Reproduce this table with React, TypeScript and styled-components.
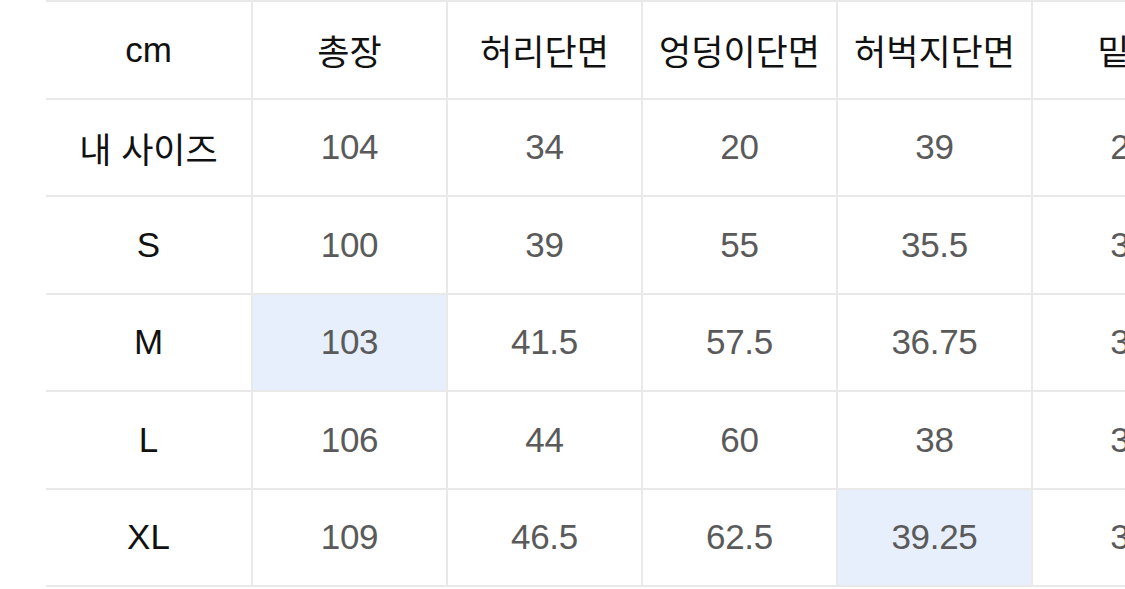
import React from 'react'
import styled, { createGlobalStyle } from 'styled-components'

type Row = {
  label: string
  values: string[]
  highlight?: number
}

const headers = ['총장', '허리단면', '엉덩이단면', '허벅지단면', '밑위']

const rows: Row[] = [
  { label: '내 사이즈', values: ['104', '34', '20', '39', '26'] },
  { label: 'S', values: ['100', '39', '55', '35.5', '30'] },
  { label: 'M', values: ['103', '41.5', '57.5', '36.75', '31'], highlight: 0 },
  { label: 'L', values: ['106', '44', '60', '38', '32'] },
  { label: 'XL', values: ['109', '46.5', '62.5', '39.25', '33'], highlight: 3 },
]

const GlobalStyle = createGlobalStyle`
  html, body {
    margin: 0;
    padding: 0;
    background: #ffffff;
    overflow: hidden;
  }
  body {
    font-family: "Liberation Sans", "Noto Sans CJK KR", sans-serif;
  }
`

const Page = styled.div`
  width: 1125px;
  height: 589px;
  overflow: hidden;
  padding-left: 46px;
  box-sizing: border-box;
`

const SizeTable = styled.div`
  display: grid;
  grid-template-columns: 207px repeat(5, 195px);
  grid-auto-rows: 97.5px;
  width: max-content;
  border-top: 2px solid #e9e9e9;
`

const Cell = styled.div<{ $head?: boolean; $label?: boolean; $active?: boolean }>`
  display: flex;
  align-items: center;
  justify-content: center;
  box-sizing: border-box;
  border-right: 2px solid #e9e9e9;
  border-bottom: 2px solid #e9e9e9;
  background: ${(p) => (p.$active ? '#e7eefc' : '#ffffff')};
  color: ${(p) => (p.$head || p.$label ? '#111111' : '#5a5a5a')};
  font-size: 35px;
  letter-spacing: ${(p) => (p.$head || p.$label ? '0' : '-0.3px')};
  white-space: nowrap;
  overflow: hidden;
`

export default function App() {
  return (
    <>
      <GlobalStyle />
      <Page>
        <SizeTable>
          <Cell $head>cm</Cell>
          {headers.map((h) => (
            <Cell key={h} $head>
              {h}
            </Cell>
          ))}
          {rows.map((row) => (
            <React.Fragment key={row.label}>
              <Cell $label>{row.label}</Cell>
              {row.values.map((v, i) => (
                <Cell key={i} $active={row.highlight === i}>
                  {v}
                </Cell>
              ))}
            </React.Fragment>
          ))}
        </SizeTable>
      </Page>
    </>
  )
}
